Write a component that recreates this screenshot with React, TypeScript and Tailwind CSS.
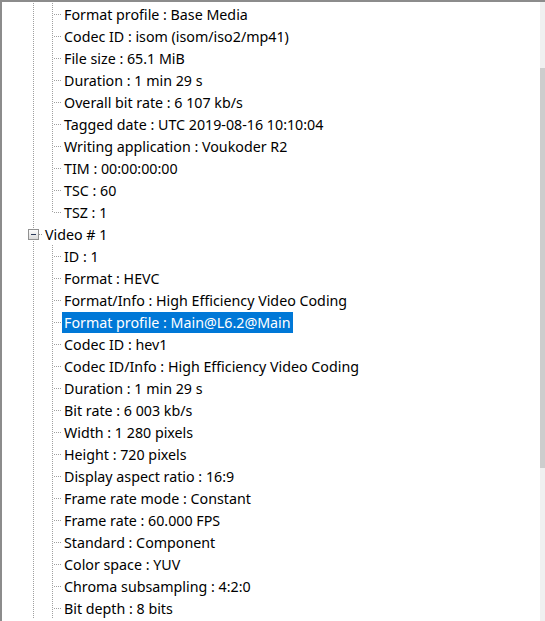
import React from "react";

type Guide = "full" | "half" | "none";
type Row = {
  text: string;
  level: 1 | 2;
  last?: boolean;
  box?: boolean;
  selected?: boolean;
};

const top: string[] = [
  "Format profile : Base Media",
  "Codec ID : isom (isom/iso2/mp41)",
  "File size : 65.1 MiB",
  "Duration : 1 min 29 s",
  "Overall bit rate : 6 107 kb/s",
  "Tagged date : UTC 2019-08-16 10:10:04",
  "Writing application : Voukoder R2",
  "TIM : 00:00:00:00",
  "TSC : 60",
  "TSZ : 1",
];

const video: string[] = [
  "ID : 1",
  "Format : HEVC",
  "Format/Info : High Efficiency Video Coding",
  "Format profile : Main@L6.2@Main",
  "Codec ID : hev1",
  "Codec ID/Info : High Efficiency Video Coding",
  "Duration : 1 min 29 s",
  "Bit rate : 6 003 kb/s",
  "Width : 1 280 pixels",
  "Height : 720 pixels",
  "Display aspect ratio : 16:9",
  "Frame rate mode : Constant",
  "Frame rate : 60.000 FPS",
  "Standard : Component",
  "Color space : YUV",
  "Chroma subsampling : 4:2:0",
  "Bit depth : 8 bits",
];

const rows: Row[] = [
  ...top.map((t, i) => ({ text: t, level: 2 as const, last: i === top.length - 1 })),
  { text: "Video # 1", level: 1, box: true },
  ...video.map((t) => ({ text: t, level: 2 as const, selected: t === "Format profile : Main@L6.2@Main" })),
];

const C = "#a0a0a0";

function Cell({ v, h, box }: { v: Guide; h?: boolean; box?: boolean }) {
  return (
    <svg width="19" height="22" className="shrink-0 block" shapeRendering="crispEdges">
      {v !== "none" && !box && (
        <line x1="9.5" y1="0" x2="9.5" y2={v === "full" ? 22 : 12} stroke={C} strokeDasharray="1 1" />
      )}
      {box && (
        <>
          <line x1="9.5" y1="0" x2="9.5" y2="6" stroke={C} strokeDasharray="1 1" />
          <line x1="9.5" y1="16" x2="9.5" y2="22" stroke={C} strokeDasharray="1 1" />
        </>
      )}
      {h && !box && <line x1="11" y1="11.5" x2="19" y2="11.5" stroke={C} strokeDasharray="1 1" />}
      {box && (
        <>
          <defs>
            <linearGradient id="bx" x1="0" y1="0" x2="0" y2="1">
              <stop offset="0" stopColor="#ffffff" />
              <stop offset="1" stopColor="#d8d8d8" />
            </linearGradient>
          </defs>
          <rect x="4.5" y="6.5" width="10" height="10" fill="url(#bx)" stroke="#919191" />
          <line x1="7" y1="11.5" x2="12" y2="11.5" stroke="#2a3a5a" />
          <line x1="15" y1="11.5" x2="19" y2="11.5" stroke={C} strokeDasharray="1 1" />
        </>
      )}
    </svg>
  );
}

export default function App() {
  return (
    <div
      className="w-[545px] h-[621px] bg-white border-t-2 border-[#8c8c8c] flex overflow-hidden"
      style={{ fontFamily: '"Noto Sans", "Open Sans", "Liberation Sans", sans-serif' }}
    >
      <div className="flex-1 border-l-2 border-[#8c8c8c] pt-[1px] overflow-hidden">
        {rows.map((r, i) => (
          <div key={i} className="flex items-center h-[22px]">
            <div className="w-[22px] shrink-0" />
            {r.level === 1 ? (
              <Cell v="full" box />
            ) : (
              <>
                <Cell v="full" />
                <Cell v={r.last ? "half" : "full"} h />
              </>
            )}
            <span
              className={
                "px-[2px] h-[21px] leading-[21px] text-[14.25px] whitespace-nowrap " +
                (r.selected ? "bg-[#0078d7] text-white" : "text-black")
              }
            >
              {r.text}
            </span>
          </div>
        ))}
      </div>
      <div className="w-[5px] shrink-0 bg-[#f0f0f0] flex flex-col">
        <div className="h-[66px] shrink-0" />
        <div className="h-[400px] bg-[#cdcdcd]" />
      </div>
    </div>
  );
}
